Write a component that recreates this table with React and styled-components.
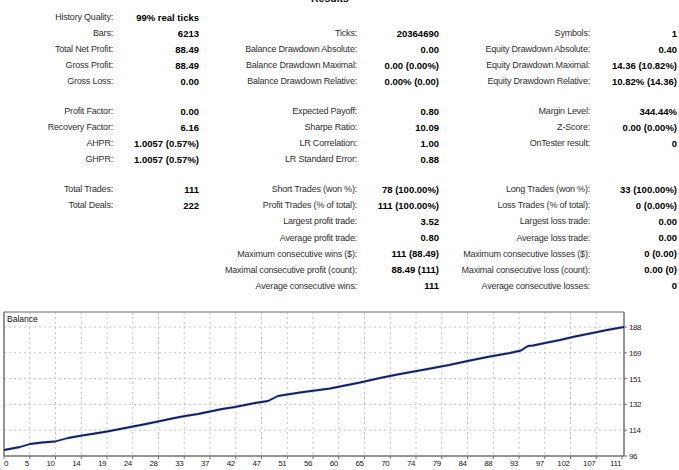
import React from 'react';
import styled, { createGlobalStyle } from 'styled-components';

const GlobalStyle = createGlobalStyle`
  html, body {
    margin: 0;
    padding: 0;
    background: #ffffff;
    overflow: hidden;
  }
  body {
    font-family: "Liberation Sans", Arial, sans-serif;
  }
`;

export const Page = styled.div`
  width: 679px;
  height: 470px;
  overflow: hidden;
`;

export const Title = styled.div`
  margin-top: -10px;
  height: 16px;
  line-height: 16px;
  padding-right: 19px;
  text-align: center;
  font-size: 10.5px;
  font-weight: bold;
  color: #111;
`;

export const Stats = styled.div`
  margin-top: 3px;
  display: flex;
  flex-direction: column;
`;

export const Row = styled.div`
  display: grid;
  grid-template-columns: 113px 86px 158px 82px 151px 87px;
  height: 16.1px;
  align-items: center;
`;

export const Spacer = styled.div`
  height: ${p => p.$h}px;
`;

export const Label = styled.div`
  text-align: right;
  font-size: 9px;
  letter-spacing: -0.2px;
  color: #303030;
  white-space: nowrap;
`;

export const Value = styled.div`
  text-align: right;
  font-size: 9.5px;
  font-weight: bold;
  color: #000;
  white-space: nowrap;
`;

export const ChartBox = styled.div`
  margin-top: 6.4px;
  height: 170px;
  svg {
    display: block;
  }
`;

const blocks = [
  [
    ['History Quality:', '99% real ticks', '', '', '', ''],
    ['Bars:', '6213', 'Ticks:', '20364690', 'Symbols:', '1'],
    ['Total Net Profit:', '88.49', 'Balance Drawdown Absolute:', '0.00', 'Equity Drawdown Absolute:', '0.40'],
    ['Gross Profit:', '88.49', 'Balance Drawdown Maximal:', '0.00 (0.00%)', 'Equity Drawdown Maximal:', '14.36 (10.82%)'],
    ['Gross Loss:', '0.00', 'Balance Drawdown Relative:', '0.00% (0.00)', 'Equity Drawdown Relative:', '10.82% (14.36)'],
  ],
  [
    ['Profit Factor:', '0.00', 'Expected Payoff:', '0.80', 'Margin Level:', '344.44%'],
    ['Recovery Factor:', '6.16', 'Sharpe Ratio:', '10.09', 'Z-Score:', '0.00 (0.00%)'],
    ['AHPR:', '1.0057 (0.57%)', 'LR Correlation:', '1.00', 'OnTester result:', '0'],
    ['GHPR:', '1.0057 (0.57%)', 'LR Standard Error:', '0.88', '', ''],
  ],
  [
    ['Total Trades:', '111', 'Short Trades (won %):', '78 (100.00%)', 'Long Trades (won %):', '33 (100.00%)'],
    ['Total Deals:', '222', 'Profit Trades (% of total):', '111 (100.00%)', 'Loss Trades (% of total):', '0 (0.00%)'],
    ['', '', 'Largest profit trade:', '3.52', 'Largest loss trade:', '0.00'],
    ['', '', 'Average profit trade:', '0.80', 'Average loss trade:', '0.00'],
    ['', '', 'Maximum consecutive wins ($):', '111 (88.49)', 'Maximum consecutive losses ($):', '0 (0.00)'],
    ['', '', 'Maximal consecutive profit (count):', '88.49 (111)', 'Maximal consecutive loss (count):', '0.00 (0)'],
    ['', '', 'Average consecutive wins:', '111', 'Average consecutive losses:', '0'],
  ],
];

const xLabels = [0, 5, 10, 14, 19, 24, 28, 33, 37, 42, 47, 51, 56, 60, 65, 70, 74, 79, 84, 88, 93, 97, 102, 107, 111];
const yLabels = [188, 169, 151, 132, 114, 96];

const L = 4, R = 624, T = 312, B = 456;
const step = 25.75;
const yStep = 25.8;
const axisFont = 'Liberation Sans, Arial, sans-serif';

const curve = [
  [4, 450], [12, 448.5], [20, 447], [30, 444], [42, 442.5], [55, 441.5], [68, 438], [82, 435.5],
  [95, 433.5], [107, 431.5], [120, 429], [133, 426.5], [146, 424], [158, 421.5], [172, 418.5],
  [185, 416], [198, 414], [210, 411.5], [222, 409], [235, 407], [255, 403], [268, 401],
  [273, 398.5], [278, 396], [284, 395], [300, 392.5], [315, 390.5], [330, 388.5], [345, 385.5],
  [360, 382.5], [380, 378], [400, 374], [425, 369.5], [449, 365], [470, 360.5], [490, 356.5],
  [510, 353], [521, 350.5], [524, 348.5], [528, 346], [533, 345.5], [545, 343], [560, 340],
  [575, 336.5], [590, 333.5], [607, 330], [624, 327],
];

function Chart() {
  const pts = curve.map(p => p.join(',')).join(' ');
  return (
    <svg width="679" height="170" viewBox="0 300 679 170">
      {Array.from({ length: 23 }, (_, i) => {
        const x = L + step * (i + 1);
        return <line key={'v' + i} x1={x} y1={T} x2={x} y2={B} stroke="#c4c4c4" strokeWidth="1" strokeDasharray="2 3" />;
      })}
      {yLabels.slice(0, 5).map((_, i) => {
        const y = B - yStep * (5 - i);
        return <line key={'h' + i} x1={L} y1={y} x2={R} y2={y} stroke="#c4c4c4" strokeWidth="1" strokeDasharray="2 3" />;
      })}
      <line x1={L} y1={T} x2={R} y2={T} stroke="#9a9a9a" strokeWidth="1.5" />
      <line x1={L} y1={T} x2={L} y2={B} stroke="#707070" strokeWidth="1.5" />
      <line x1={R} y1={T} x2={R} y2={B} stroke="#707070" strokeWidth="1.5" />
      <line x1={L} y1={B} x2={R} y2={B} stroke="#707070" strokeWidth="1.5" />
      {yLabels.map((v, i) => {
        const y = B - yStep * (5 - i);
        return (
          <g key={'yl' + v}>
            <line x1={R} y1={y} x2={R + 3} y2={y} stroke="#707070" strokeWidth="1" />
            <text x={R + 5} y={y + 3} fontSize="8" letterSpacing="-0.4" fill="#222" fontFamily={axisFont}>{v}</text>
          </g>
        );
      })}
      {xLabels.map((v, i) => {
        const x = L + step * i;
        return (
          <g key={'xl' + v}>
            <line x1={x} y1={B} x2={x} y2={B + 3} stroke="#707070" strokeWidth="1" />
            <text
              x={i === 0 ? x : x - 1}
              y={465.5}
              fontSize="8"
              letterSpacing="-0.4"
              fill="#222"
              textAnchor={i === 0 ? 'start' : 'end'}
              fontFamily={axisFont}
            >
              {v}
            </text>
          </g>
        );
      })}
      <text x={7} y={322} fontSize="8.5" fill="#111" fontFamily={axisFont}>Balance</text>
      <polyline points={pts} fill="none" stroke="#b4c2ea" strokeWidth="3.2" strokeLinejoin="round" opacity="0.5" />
      <polyline points={pts} fill="none" stroke="#141f6b" strokeWidth="1.8" strokeLinejoin="round" />
    </svg>
  );
}

export default function App() {
  return (
    <Page>
      <GlobalStyle />
      <Title>Results</Title>
      <Stats>
        {blocks.map((block, b) => (
          <React.Fragment key={b}>
            {b > 0 && <Spacer $h={b === 1 ? 13.5 : 13.9} />}
            {block.map((r, i) => (
              <Row key={i}>
                <Label>{r[0]}</Label>
                <Value>{r[1]}</Value>
                <Label>{r[2]}</Label>
                <Value>{r[3]}</Value>
                <Label>{r[4]}</Label>
                <Value>{r[5]}</Value>
              </Row>
            ))}
          </React.Fragment>
        ))}
      </Stats>
      <ChartBox>
        <Chart />
      </ChartBox>
    </Page>
  );
}
